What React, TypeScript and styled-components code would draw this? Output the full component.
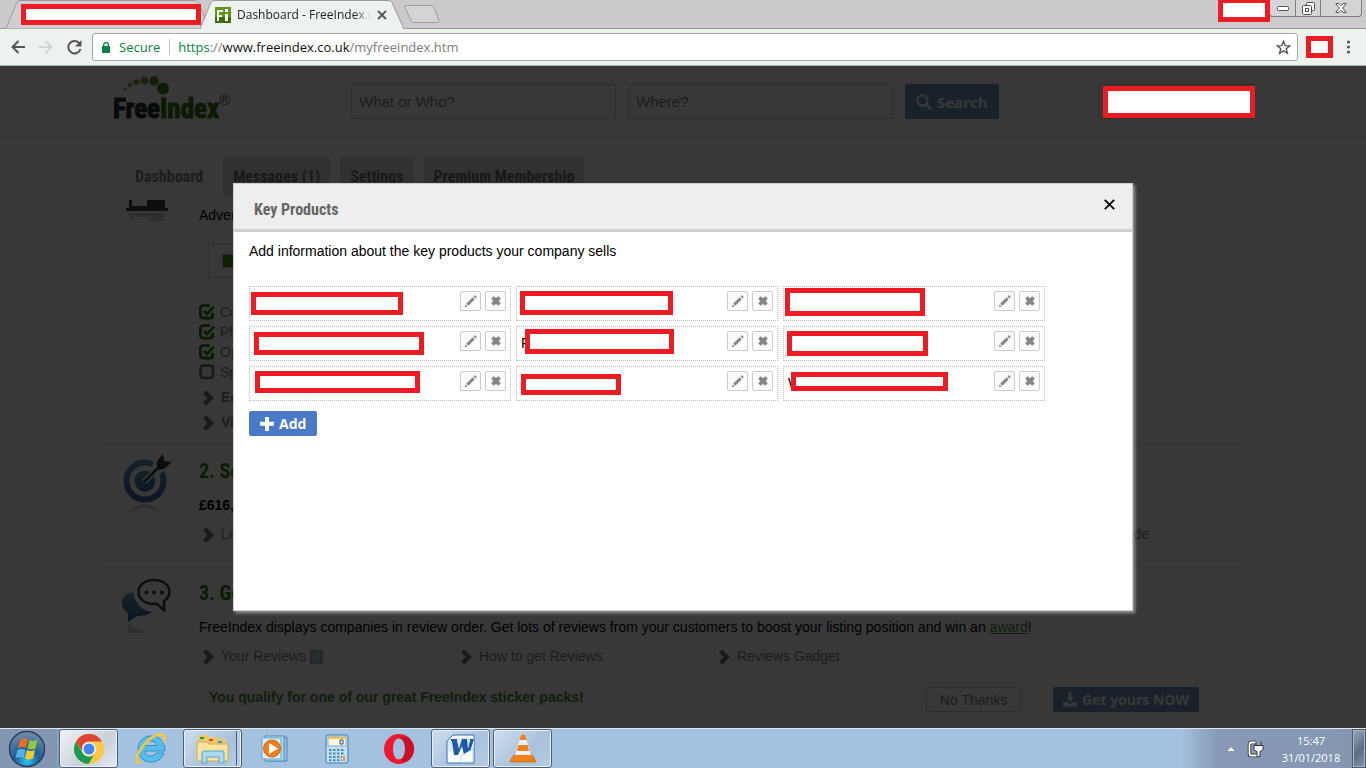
import React from "react";
import styled, { createGlobalStyle } from "styled-components";

const ARIAL = `"Liberation Sans", Arial, sans-serif`;
const UI = `"Open Sans", "Noto Sans", sans-serif`;
const NARROW = `"Liberation Sans Narrow", "Roboto Condensed", "DejaVu Sans Condensed", sans-serif`;

const GlobalStyle = createGlobalStyle`
  *, *::before, *::after { box-sizing: border-box; }
  body { margin: 0; background: #383838; font-family: ${ARIAL}; font-size: 14px; color: #000; }
  button, input { font: inherit; margin: 0; }
  h1, h2, p, ul { margin: 0; padding: 0; }
  ul { list-style: none; }
  svg { display: block; flex: none; }
`;

const Screen = styled.div`
  display: flex;
  flex-direction: column;
  min-height: 100vh;
`;

/* Red frame that hides private details. */
const Mask = styled.span<{ $x: number; $y: number; $w: number; $h: number }>`
  position: absolute;
  left: ${(p) => p.$x}px;
  top: ${(p) => p.$y}px;
  width: ${(p) => p.$w}px;
  height: ${(p) => p.$h}px;
  border: 5px solid #ed1c24;
  background: #fff;
  z-index: 2;
`;

/* ---------- browser chrome ---------- */

const TitleBar = styled.div`
  position: relative;
  display: flex;
  height: 29px;
  padding-left: 6px;
  background: #cdcacd;
  border-bottom: 1px solid #9c999c;
  font-family: ${UI};
  font-size: 12px;
`;

const Tab = styled.div<{ $active?: boolean }>`
  position: relative;
  display: flex;
  align-items: center;
  gap: 6px;
  width: 204px;
  height: 29px;
  padding: 0 17px 0 15px;
  margin-left: ${(p) => (p.$active ? "-10px" : "0")};
  z-index: ${(p) => (p.$active ? 1 : 0)};
`;

const TabShape = styled.svg`
  position: absolute;
  inset: 0;
  width: 100%;
  height: 100%;
`;

const TabTitle = styled.span`
  position: relative;
  flex: 1;
  min-width: 0;
  white-space: nowrap;
  line-height: 18px;
  color: #222;
  mask-image: linear-gradient(to right, #000 118px, transparent 134px);
`;

const PlainButton = styled.button`
  position: relative;
  display: flex;
  align-items: center;
  justify-content: center;
  padding: 0;
  border: 0;
  background: none;
  color: #555;
`;

const WindowButtons = styled.div`
  position: relative;
  display: flex;
  height: 17px;
  margin: 0 4px 0 auto;
  border: 1px solid #7d7b7d;
  border-top: 0;
  border-radius: 0 0 4px 4px;
  background: #d6d3d6;
`;

const WindowButton = styled(PlainButton)<{ $wide?: boolean }>`
  width: ${(p) => (p.$wide ? 41 : 25)}px;
  & + & { border-left: 1px solid #7d7b7d; }
`;

const Toolbar = styled.div`
  display: flex;
  align-items: center;
  height: 37px;
  padding: 0 8px 0 6px;
  background: #eef2ef;
  border-bottom: 1px solid #b0b4b1;
`;

const NavButton = styled(PlainButton)`
  width: 24px;
  height: 28px;
  margin-right: 4px;
`;

const AddressBar = styled.label`
  display: flex;
  flex: 1;
  align-items: center;
  height: 28px;
  margin-left: 2px;
  padding: 0 6px 0 9px;
  border: 1px solid #a6a9a7;
  border-radius: 3px;
  background: #fff;
  font-family: ${UI};
  font-size: 13px;
  line-height: 18px;
`;

const Secure = styled.span`
  margin-left: 9px;
  padding-right: 9px;
  border-right: 1px solid #c4c4c4;
  line-height: 16px;
  color: #0b8043;
`;

const Url = styled.span`
  flex: 1;
  margin-left: 8px;
  color: #7d7d7d;
  b { font-weight: 400; color: #111; }
  i { font-style: normal; color: #0b8043; }
`;

const ExtensionSlot = styled.div`
  position: relative;
  width: 44px;
  height: 22px;
`;

/* ---------- page behind the dialog ---------- */

const Page = styled.div`
  position: relative;
  flex: 1;
  overflow: hidden;
  background: #fff;
`;

const SiteHeader = styled.header`
  border-bottom: 1px solid #d0d0d0;
  padding-right: 16px;
`;

const HeaderInner = styled.div`
  display: flex;
  align-items: flex-start;
  max-width: 1160px;
  height: 71px;
  margin: 0 auto;
  padding: 18px 0 0 18px;
`;

const Logo = styled.a`
  position: relative;
  width: 238px;
  height: 46px;
  margin-top: -8px;
  color: #2b3330;
  text-decoration: none;
`;

const LogoDots = styled.svg`
  position: absolute;
  left: 10px;
  top: 0;
`;

const LogoText = styled.span`
  display: flex;
  padding-top: 17px;
  font: 700 27px/32px ${NARROW};
  -webkit-text-stroke: 1px currentColor;
  span { color: #357812; }
  small { font: 400 15px/14px ${ARIAL}; color: #555; -webkit-text-stroke: 0; }
`;

const SearchInput = styled.input`
  width: 265px;
  height: 35px;
  margin-right: 12px;
  padding: 0 7px;
  border: 1px solid #c8c8c8;
  border-radius: 2px;
  background: #fff;
  font-size: 15px;
  &::placeholder { color: #858585; opacity: 1; }
`;

const BlueButton = styled.button<{ $dim?: boolean; $tall?: boolean }>`
  display: flex;
  align-items: center;
  justify-content: center;
  gap: 5px;
  height: ${(p) => (p.$tall ? 35 : 25)}px;
  padding: 0 ${(p) => (p.$dim && !p.$tall ? 10 : 11)}px;
  border: 0;
  border-radius: 2px;
  background: ${(p) => (p.$dim ? "#7397c5" : "#4a7ac7")};
  color: #fff;
  font: 700 ${(p) => (p.$tall ? 15 : 14)}px/20px ${UI};
  white-space: nowrap;
`;

const Account = styled.div`
  position: relative;
  width: 157px;
  height: 35px;
  margin-left: auto;
  border: 1px solid #d0d0d0;
  border-radius: 2px;
`;

const Content = styled.main`
  padding: 19px 16px 0 0;
`;

const Container = styled.div`
  max-width: 1140px;
  margin: 0 auto;
`;

const Tabs = styled.nav`
  display: flex;
  gap: 10px;
  padding-left: 20px;
`;

const PageTab = styled.a<{ $current?: boolean }>`
  height: 40px;
  padding: 0 10px;
  background: ${(p) => (p.$current ? "transparent" : "#d9e4d8")};
  color: ${(p) => (p.$current ? "#858585" : "#707070")};
  font: 700 16px/40px ${NARROW};
  text-decoration: none;
`;

const Section = styled.section<{ $top: number }>`
  display: grid;
  grid-template-columns: 94px 1fr;
  padding-top: ${(p) => p.$top}px;
  & + & { border-top: 1px dotted #ccc; }
`;

const Figure = styled.div`
  padding-left: 16px;
  margin-top: -5px;
`;

const Copy = styled.p<{ $bold?: boolean }>`
  line-height: 20px;
  font-weight: ${(p) => (p.$bold ? 700 : 400)};
  a { color: #4d7d3c; }
`;

const Title = styled.h2`
  margin-bottom: 12px;
  color: #2d7a12;
  font: 700 20px/24px ${NARROW};
`;

const ProgressBox = styled.div`
  width: 400px;
  height: 35px;
  margin: 18px 0 24px 9px;
  padding: 10px 13px;
  border: 1px solid #cfcfcf;
`;

const ProgressBar = styled.div`
  height: 14px;
  border: 1px solid #ccc;
  background: #3f8f12;
`;

const CheckRow = styled.li`
  display: flex;
  align-items: center;
  gap: 5px;
  height: 20px;
  color: #858585;
`;

const Links = styled.ul<{ $stack?: boolean }>`
  display: flex;
  flex-direction: ${(p) => (p.$stack ? "column" : "row")};
  padding: ${(p) => (p.$stack ? "3px 0 8px 3px" : "7px 0 13px 3px")};
  font-weight: ${(p) => (p.$stack ? 700 : 400)};
`;

const LinkItem = styled.li<{ $end?: boolean }>`
  width: 258px;
  height: 25px;
  margin-left: ${(p) => (p.$end ? "auto" : "0")};
  padding-right: ${(p) => (p.$end ? "96px" : "0")};
  text-align: ${(p) => (p.$end ? "right" : "left")};
  line-height: 25px;
  a {
    display: ${(p) => (p.$end ? "inline" : "flex")};
    align-items: center;
    gap: 6px;
    color: #858585;
    text-decoration: none;
  }
`;

const Count = styled.span`
  width: 13px;
  height: 14px;
  margin-left: -2px;
  background: #9cbcc1;
  color: #e4eef0;
  font-size: 12px;
  line-height: 14px;
  text-align: center;
`;

const Offer = styled.div`
  display: flex;
  align-items: center;
  margin: 5px 46px 0 10px;
  p { flex: 1; padding-bottom: 5px; color: #4c8a30; font-weight: 700; line-height: 20px; }
`;

const GhostButton = styled.button`
  width: 95px;
  height: 25px;
  margin-right: 32px;
  padding: 0;
  border: 1px solid #c8c8c8;
  border-radius: 2px;
  background: none;
  color: #858585;
`;

/* ---------- dialog ---------- */

const Backdrop = styled.div`
  position: absolute;
  inset: 0;
  display: flex;
  align-items: center;
  justify-content: center;
  background: rgba(0, 0, 0, 0.78);
`;

const Dialog = styled.div`
  display: flex;
  flex-direction: column;
  width: 900px;
  max-width: 100%;
  min-height: 428px;
  border: 1px solid #ccc;
  background: #fff;
  box-shadow: 2px 2px 3px #999;
`;

const DialogHead = styled.div`
  display: flex;
  align-items: center;
  justify-content: space-between;
  height: 48px;
  padding: 0 15px 0 20px;
  border-bottom: 3px solid #d0d0d0;
  background: #eee;
  h1 { padding-top: 6px; color: #666; font: 700 16px/24px ${NARROW}; }
`;

const CloseButton = styled(PlainButton)`
  width: 16px;
  height: 16px;
  margin-bottom: 4px;
  color: #000;
`;

const DialogBody = styled.div`
  padding: 9px 15px;
  line-height: 20px;
`;

const ProductGrid = styled.ul`
  display: grid;
  grid-template-columns: repeat(3, 262px);
  gap: 5px;
  margin: 25px 0 10px;
`;

const Product = styled.li`
  position: relative;
  display: flex;
  align-items: flex-start;
  gap: 4px;
  height: 35px;
  padding: 4px;
  border: 1px dotted #c0c0c0;
`;

const ProductName = styled.span`
  flex: 1;
  line-height: 24px;
`;

const IconButton = styled(PlainButton)`
  width: 21px;
  height: 20px;
  border: 1px solid #ccc;
  border-radius: 2px;
  background: #fdfafd;
  color: #858585;
`;

/* ---------- taskbar ---------- */

const Taskbar = styled.footer`
  display: flex;
  height: 40px;
  border-top: 1px solid #dbe7f5;
  background: linear-gradient(to right, #8397b2 0, #8397b2 56px, #a4c1df 66px, #a4c1df calc(100% - 185px), #8799b4 calc(100% - 148px), #8496b0 100%);
  box-shadow: 0 -1px #30343b;
`;

const Task = styled.button<{ $kind?: "open" | "active" | "stack" }>`
  display: flex;
  align-items: center;
  justify-content: center;
  width: 59px;
  height: 39px;
  margin-right: 3px;
  padding: 0;
  border: 1px solid ${(p) => (p.$kind ? "#4f6076" : "transparent")};
  border-radius: 3px;
  background: ${(p) =>
    p.$kind === "active"
      ? "linear-gradient(135deg, #f1f2f5, #c9d0dc 60%, #e8ebf1)"
      : p.$kind
        ? "linear-gradient(135deg, #cfdeee, #a9c1dd 60%, #b6cde6)"
        : "none"};
  box-shadow: ${(p) =>
    p.$kind === "stack"
      ? "inset 0 0 0 1px #e6eff8, inset -4px 0 #b8cde4, inset -5px 0 #4f6076"
      : p.$kind
        ? "inset 0 0 0 1px #e6eff8"
        : "none"};
`;

const StartButton = styled(PlainButton)`
  width: 54px;
  margin-right: 5px;
`;

const Tray = styled.div`
  display: flex;
  align-items: center;
  margin-left: auto;
  color: #fff;
  font: 11px/17px ${UI};
  text-align: center;
`;

const Clock = styled.time`
  width: 82px;
  margin-left: 4px;
`;

const ShowDesktop = styled.button`
  width: 14px;
  height: 39px;
  padding: 0;
  border: 1px solid #4b5a6c;
  background: linear-gradient(135deg, #9aabc0, #5b6c80 55%, #8495ab);
  box-shadow: inset 0 0 0 1px #a6b5c9;
`;

/* ---------- icons ---------- */

const Chevron = () => (
  <svg width="13" height="16" viewBox="0 0 13 16" fill="#757575">
    <path d="M1 3.4 4.2.4 12 8 4.2 15.6 1 12.6 5.6 8z" />
  </svg>
);

const Check = ({ on }: { on: boolean }) => (
  <svg width="16" height="16" viewBox="0 0 16 16" fill="none" strokeWidth="2.8" stroke={on ? "#2d7a12" : "#777"}>
    <path d={on ? "M13.6 9v2.6a2.5 2.5 0 0 1-2.5 2.5H3.9a2.5 2.5 0 0 1-2.5-2.5V4.2a2.5 2.5 0 0 1 2.5-2.5h7" : "M4 1.6h7.5A2.4 2.4 0 0 1 13.9 4v7.5a2.4 2.4 0 0 1-2.4 2.4H4a2.4 2.4 0 0 1-2.4-2.4V4A2.4 2.4 0 0 1 4 1.6z"} />
    {on && <path d="m5 7 3 3 7-7.4" />}
  </svg>
);

const Pencil = () => (
  <svg width="13" height="13" viewBox="0 0 13 13" fill="currentColor">
    <path d="M.8 12.2 1.5 9.4 3.6 11.5zM2.2 8.700 8.6 2.300 10.7 4.400 4.300 10.8zM9.500 1.400l.8-.8q.5-.5 1 0l1.100 1.100q.5.5 0 1l-.8.8z" />
  </svg>
);

const Cross = () => (
  <svg width="10" height="10" viewBox="0 0 10 10" fill="currentColor">
    <path d="M.4 2.4 2.4.4h.7L5 2.3 6.9.4h.7l2 2v.7L7.7 5l1.9 1.9v.7l-2 2h-.7L5 7.7 3.1 9.6h-.7l-2-2v-.7L2.3 5 .4 3.1z" />
  </svg>
);

const Plus = () => (
  <svg width="14" height="14" viewBox="0 0 14 14" fill="#fff">
    <path d="M5 0h4v4.800h5v4H9V14H5V8.800H0v-4h5z" />
  </svg>
);

const Magnifier = () => (
  <svg width="16" height="16" viewBox="0 0 16 16" fill="none" stroke="#fff">
    <circle cx="6.500" cy="6.500" r="5.200" strokeWidth="2.200" />
    <path d="m10.500 10.500 4 4" strokeWidth="3" strokeLinecap="round" />
  </svg>
);

const Download = () => (
  <svg width="14" height="15" viewBox="0 0 14 15" fill="#fff">
    <path d="M5.500 0h3v5.500H11L7 9.800 3 5.500h2.500zM0 10h4l3 2.500L10 10h4v4.500H0z" />
  </svg>
);

const LogoArc = () => (
  <LogoDots width="48" height="22" viewBox="0 0 48 22">
    <circle cx="2" cy="13" r="1.700" fill="#a9ab8a" />
    <circle cx="7" cy="9" r="2.300" fill="#94a065" />
    <circle cx="13.500" cy="6" r="3" fill="#8c9c4e" />
    <circle cx="21.500" cy="4.500" r="3.800" fill="#849a32" />
    <circle cx="31" cy="5" r="4.700" fill="#558a1c" />
    <circle cx="40" cy="12.500" r="6" fill="#36800f" />
  </LogoDots>
);

const Laptop = () => (
  <svg width="52" height="24" viewBox="0 0 52 24">
    <path d="M8 0h3v6h15V0h18v8h3v3H5V8h3z" fill="#3c4440" />
    <path d="M8 13h37l-2 8H28v-4H12v4H8z" fill="#d5d5d5" />
  </svg>
);

const Target = () => (
  <svg width="54" height="62" viewBox="0 0 54 62" fill="none">
    <defs>
      <linearGradient id="targetBlue" x1="0" y1="0" x2="0" y2="1">
        <stop offset="0" stopColor="#5d93b5" />
        <stop offset="1" stopColor="#3a64a8" />
      </linearGradient>
    </defs>
    <circle cx="24" cy="27" r="18.500" stroke="url(#targetBlue)" strokeWidth="6" />
    <circle cx="24" cy="27" r="10.500" fill="url(#targetBlue)" />
    <path d="M33 5 30 18l7 4 10-9z" fill="#fff" />
    <path d="m23 28 16-16" stroke="#fff" strokeWidth="6" />
    <path d="m23 28 16-16" stroke="#333b3a" strokeWidth="2.500" />
    <path d="m36 7 6-7 1 7 8 1-8 7-7 1z" fill="#333b3a" />
    <path d="M7 59q17-18 34 0-5-3-9-3-8-5-16 0-4 0-9 3z" fill="#c9cfca" />
  </svg>
);

const Bubbles = () => (
  <svg width="54" height="60" viewBox="0 0 54 60" fill="none">
    <defs>
      <linearGradient id="bubbleBlue" x1="0" y1="0" x2="0" y2="1">
        <stop offset="0" stopColor="#6a9cb9" />
        <stop offset="1" stopColor="#335f9f" />
      </linearGradient>
    </defs>
    <path d="M12 16C3 18 0 23 1 29c1 4 3 6 6 8v9l9-6c6 0 11-1 15-4-9-1-16-6-19-20z" fill="url(#bubbleBlue)" />
    <path d="M33 4c9 0 15.500 5 15.500 12 0 4-2 7-5.500 9v9l-7-6h-3c-9 0-15.500-5-15.500-12S24 4 33 4z" stroke="#3a3f3e" strokeWidth="2.500" />
    <g fill="#3a3f3e"><circle cx="25.500" cy="16.500" r="2" /><circle cx="33" cy="16.500" r="2" /><circle cx="41" cy="16.500" r="2" /></g>
    <path d="M7 48l6 4q7 2 14 5H7z" fill="#ccd2cd" />
  </svg>
);

const Favicon = () => (
  <svg width="16" height="16" viewBox="0 0 16 16" style={{ position: "relative" }}>
    <path d="M0 0h16v16H0z" fill="#62951f" />
    <path d="M0 10h16v6H0z" fill="#3c6b10" />
    <path d="M2 3h6v2H4v3h3v2H4v4H2zM10 7h3v7h-3zM10 2h3v3h-3z" fill="#fff" />
  </svg>
);

const Windows = () => (
  <svg width="38" height="38" viewBox="0 0 38 38">
    <defs>
      <radialGradient id="orb" cx=".5" cy=".85" r=".8">
        <stop offset="0" stopColor="#2bc4f4" />
        <stop offset=".45" stopColor="#1f5f98" />
        <stop offset="1" stopColor="#6f8ca8" />
      </radialGradient>
    </defs>
    <circle cx="19" cy="19" r="17.500" fill="url(#orb)" stroke="#29405c" strokeWidth="1.500" />
    <path d="M12 10q4-3 8-1l-2 9q-4-2-8 0z" fill="#ee6a28" />
    <path d="M21.500 10q4 2 8-.500l-2 9q-4 2-8 0z" fill="#93c83e" />
    <path d="M9.500 20q4-2 8 0l-2 8q-4-2-8 0z" fill="#55b0ec" />
    <path d="M19 20q4 2 8 0l-2 8.500q-4 2-8 0z" fill="#fbc928" />
  </svg>
);

const Chrome = () => (
  <svg width="30" height="30" viewBox="0 0 30 30">
    <circle cx="15" cy="15" r="15" fill="#fbc941" />
    <path d="M2 7.500A15 15 0 0 1 28 7.500H15A7.500 7.500 0 0 0 8.500 11.300L8 17z" fill="#db4437" />
    <path d="M2 7.500A15 15 0 0 0 14.500 30l6.500-11A7 7 0 0 1 8.500 18.800z" fill="#1a9a58" />
    <circle cx="15" cy="15" r="7" fill="#f4f4f4" />
    <circle cx="15" cy="15" r="5.500" fill="#4285f4" />
  </svg>
);

const Explorer = () => (
  <svg width="34" height="32" viewBox="0 0 34 32" fill="none">
    <path d="M17 3C9 3 4 9 4 16c0 8 6 13 13 13 6 0 11-3 13-9h-8c-1 2-3 3-5 3-4 0-6-2-6-5h20C31 9 26 3 17 3zm-6 9.500c.500-3 3-4.500 6-4.500s5.500 1.500 6 4.500z" fill="#56bdee" stroke="#2684c4" strokeWidth=".8" fillRule="evenodd" />
    <path d="M7 29C0 32 2 22 9 13S26-1 30 3c2 2 1 4-1 6" stroke="#f5c93a" strokeWidth="2.600" />
  </svg>
);

const Folder = () => (
  <svg width="34" height="32" viewBox="0 0 34 32">
    <path d="M2 6V3q0-1 1-1h8l2 2h9v2h8v22H2z" fill="#ecc869" />
    <path d="M4 4h4v2H4z" fill="#2a9a3a" /><path d="M13 6h4v2h-4z" fill="#d8443a" /><path d="M22 8h4v2h-4z" fill="#3a8fd8" />
    <path d="M1 9h10l2 2h19v17H1z" fill="#f8e3a0" stroke="#d6ad50" />
    <path d="M6 30V20q0-2 2-2h18q2 0 2 2v10h-5v-6H11v6z" fill="#a9daf3" stroke="#5ba3cf" />
  </svg>
);

const Media = () => (
  <svg width="28" height="28" viewBox="0 0 28 28">
    <path d="M7 2h19v24H7z" fill="#8fc1e3" stroke="#4c8ab8" />
    <path d="M4 1h19v25H4z" fill="#b6d8ef" stroke="#4c8ab8" />
    <path d="M1 3h19v21H1z" fill="#dbecf7" stroke="#6aa3cc" />
    <circle cx="11" cy="13.500" r="8.500" fill="#f08019" stroke="#d1650f" />
    <path d="m8 8 9 5.500L8 19z" fill="#fff" />
  </svg>
);

const Calculator = () => (
  <svg width="24" height="30" viewBox="0 0 24 30">
    <rect x="1" y="1" width="22" height="28" rx="2" fill="#c4e0f3" stroke="#3d7fb1" />
    <path d="M3 3h18v9H3z" fill="#f6f7f0" stroke="#8aa9bb" /><path d="M3 3h18v2H3z" fill="#f1c04c" />
    <path d="M15 6h3v4h-3z" fill="none" stroke="#345" />
    <path d="M4 16h16M4 19.500h16M4 23h13M4 26.300h13" stroke="#4d8ab8" strokeWidth="2" strokeDasharray="2.500 1.500" />
    <path d="M18 22h2v5h-2z" fill="#f1962c" />
  </svg>
);

const Opera = () => (
  <svg width="30" height="30" viewBox="0 0 30 30">
    <path fillRule="evenodd" d="M15 0a15 15 0 1 0 0 30 15 15 0 0 0 0-30zm0 4.500c4 0 6 5 6 10.500s-2 10.500-6 10.500S9 20.500 9 15 11 4.500 15 4.500z" fill="#ee1830" />
    <path d="M15 25.500c4 0 6-5 6-10.500S19 4.500 15 4.500C17 3 20 2 24 3a15 15 0 0 1 0 24c-4 1-7 0-9-1.500z" fill="#c81026" />
  </svg>
);

const Word = () => (
  <svg width="30" height="30" viewBox="0 0 30 30">
    <path d="M7 1h21v28H1V7z" fill="#f5f9fd" stroke="#3b6fae" />
    <path d="M2 6q12-4 26-2v9L2 18z" fill="#dbe9f6" />
    <path d="M5 5h6v2l2 8 3-10h5l1 10 2-8V5h4l-5 16h-5l-2-9-4 9H8L6 7H5z" fill="#1d58a6" />
    <path d="m15 22 12-7v13H15z" fill="#fff" stroke="#c5d5e5" />
  </svg>
);

const Cone = () => (
  <svg width="28" height="29" viewBox="0 0 28 29">
    <path d="M5 21h18l4 6q0 1-1 1H2q-1 0-1-1z" fill="#f08019" stroke="#c9610a" strokeWidth=".7" />
    <path d="M12 1q2-1 4 0l6 21q-8 4-16 0z" fill="#f4f1ee" />
    <path d="M12 1q2-1 4 0l1.500 5h-7zM9.400 11h9.200l1.400 6H8zM6.500 21h15l.500 2q-8 4-16 0z" fill="#f0801c" />
  </svg>
);

const PRODUCTS = [
  { name: "", x: 1, y: 5, w: 152, h: 23 },
  { name: "", x: 3, y: 4, w: 153, h: 24 },
  { name: "", x: 1, y: 1, w: 140, h: 28 },
  { name: "", x: 4, y: 5, w: 170, h: 23 },
  { name: "F", x: 8, y: 2, w: 149, h: 25 },
  { name: "", x: 3, y: 4, w: 141, h: 25 },
  { name: "", x: 5, y: 4, w: 165, h: 22 },
  { name: "", x: 4, y: 7, w: 100, h: 21 },
  { name: "W", x: 7, y: 5, w: 157, h: 19 },
];

const NavLink = ({ children, end }: { children: React.ReactNode; end?: boolean }) => (
  <LinkItem $end={end}>
    <a href="#">{!end && <Chevron />}{children}</a>
  </LinkItem>
);

export default function App() {
  return (
    <Screen>
      <GlobalStyle />
      <TitleBar>
        <Tab>
          <TabShape viewBox="0 0 204 29" preserveAspectRatio="none">
            <path d="M0 28.500 11 2Q12 .5 14 .5H188q3 0 4 2l12 26" fill="#d1ced1" stroke="#9c999c" />
          </TabShape>
          <Mask aria-hidden="true" $x={15} $y={4} $w={180} $h={21} />
        </Tab>
        <Tab $active>
          <TabShape viewBox="0 0 204 29" preserveAspectRatio="none">
            <path d="M0 29 11 2Q12 .5 14 .5H188q3 0 4 2l12 26.500" fill="#eef2ef" stroke="#9c999c" />
          </TabShape>
          <Favicon />
          <TabTitle>Dashboard - FreeIndex.co</TabTitle>
          <PlainButton aria-label="Close tab">
            <svg width="10" height="10" viewBox="0 0 10 10" stroke="#555" strokeWidth="1.800"><path d="m1 1 8 8M9 1 1 9" /></svg>
          </PlainButton>
        </Tab>
        <PlainButton aria-label="New tab">
          <svg width="36" height="18" viewBox="0 0 36 18" fill="#d6d3d6" stroke="#a09da0"><path d="M2 .5h25q2 0 3 2l5 13q0 2-2 2H10q-2 0-3-2L1 2.500Q0 .5 2 .5z" /></svg>
        </PlainButton>
        <WindowButtons>
          <Mask aria-hidden="true" $x={-52} $y={-2} $w={52} $h={24} />
          <WindowButton aria-label="Minimise">
            <svg width="12" height="5" viewBox="0 0 12 5"><rect x=".5" y=".5" width="11" height="4" rx="1" fill="#fff" stroke="#555" /></svg>
          </WindowButton>
          <WindowButton aria-label="Restore">
            <svg width="13" height="13" viewBox="0 0 13 13" fill="#fff" stroke="#555"><rect x="4.500" y=".5" width="8" height="8" rx="1" /><rect x=".5" y="3.500" width="9" height="9" rx="1" /><rect x="3.500" y="6.500" width="3" height="3" /></svg>
          </WindowButton>
          <WindowButton $wide aria-label="Close window">
            <svg width="12" height="10" viewBox="0 0 12 10" fill="#fff" stroke="#555"><path d="M.8.5h3L6 2.800 8.200.5h3L7.800 5l3.400 4.500h-3L6 7.200 3.800 9.500h-3L4.200 5z" /></svg>
          </WindowButton>
        </WindowButtons>
      </TitleBar>

      <Toolbar>
        <NavButton aria-label="Back">
          <svg width="14" height="14" viewBox="0 0 14 14" fill="none" stroke="#555" strokeWidth="2"><path d="M14 7H1.500M7.500 1l-6 6 6 6" /></svg>
        </NavButton>
        <NavButton aria-label="Forward">
          <svg width="14" height="14" viewBox="0 0 14 14" fill="none" stroke="#d0d3d1" strokeWidth="2"><path d="M0 7h12.500M6.500 1l6 6-6 6" /></svg>
        </NavButton>
        <NavButton aria-label="Reload">
          <svg width="15" height="15" viewBox="0 0 15 15" fill="none" stroke="#555" strokeWidth="2"><path d="M12.500 3.500a6.200 6.200 0 1 0 1 5.500" /><path d="M14.500 0v6.500H8z" fill="#555" stroke="none" /></svg>
        </NavButton>
        <AddressBar>
          <svg width="8" height="11" viewBox="0 0 8 11"><path d="M0 4h8v7H0z" fill="#0b8043" /><path d="M1.700 4.500V3a2.300 2.300 0 0 1 4.600 0v1.500" fill="none" stroke="#0b8043" strokeWidth="1.300" /></svg>
          <Secure>Secure</Secure>
          <Url><i>https</i>://<b>www.freeindex.co.uk</b>/myfreeindex.htm</Url>
          <svg width="15" height="15" viewBox="0 0 15 15" fill="none" stroke="#555" strokeWidth="1.400"><path d="m7.500 1.300 1.700 4.300 4.600.3-3.600 2.900 1.200 4.500-3.900-2.500-3.900 2.500 1.200-4.500L1.200 5.900l4.600-.3z" /></svg>
        </AddressBar>
        <ExtensionSlot><Mask aria-hidden="true" $x={8} $y={0} $w={27} $h={22} /></ExtensionSlot>
        <PlainButton aria-label="Browser menu">
          <svg width="16" height="14" viewBox="0 0 16 14" fill="#555"><circle cx="6.500" cy="2" r="1.600" /><circle cx="6.500" cy="7" r="1.600" /><circle cx="6.500" cy="12" r="1.600" /></svg>
        </PlainButton>
      </Toolbar>

      <Page>
        <SiteHeader>
          <HeaderInner>
            <Logo href="#" aria-label="FreeIndex">
              <LogoArc />
              <LogoText>Free<span>Index</span><small>®</small></LogoText>
            </Logo>
            <SearchInput aria-label="What or who" placeholder="What or Who?" />
            <SearchInput aria-label="Where" placeholder="Where?" />
            <BlueButton $dim $tall><Magnifier />Search</BlueButton>
            <Account><Mask aria-hidden="true" $x={4} $y={1} $w={152} $h={32} /></Account>
          </HeaderInner>
        </SiteHeader>
        <Content>
          <Container>
            <Tabs>
              <PageTab href="#" $current>Dashboard</PageTab>
              <PageTab href="#">Messages (1)</PageTab>
              <PageTab href="#">Settings</PageTab>
              <PageTab href="#">Premium Membership</PageTab>
            </Tabs>
            <Section $top={8}>
              <Figure><Laptop /></Figure>
              <div>
                <Copy>Advertise</Copy>
                <ProgressBox><ProgressBar /></ProgressBox>
                <ul>
                  <CheckRow><Check on />Company</CheckRow>
                  <CheckRow><Check on />Photos</CheckRow>
                  <CheckRow><Check on />Opening</CheckRow>
                  <CheckRow><Check on={false} />Special</CheckRow>
                </ul>
                <Links $stack>
                  <NavLink>Edit</NavLink>
                  <NavLink>View</NavLink>
                </Links>
              </div>
            </Section>
            <Section $top={15}>
              <Figure><Target /></Figure>
              <div>
                <Title>2. Sell</Title>
                <Copy $bold>£616,</Copy>
                <Links>
                  <NavLink>Leads</NavLink>
                  <NavLink end>Guide</NavLink>
                </Links>
              </div>
            </Section>
            <Section $top={20}>
              <Figure><Bubbles /></Figure>
              <div>
                <Title>3. Get</Title>
                <Copy>
                  FreeIndex displays companies in review order. Get lots of reviews from your customers to boost your listing position and win an <a href="#">award</a>!
                </Copy>
                <Links>
                  <NavLink>Your Reviews <Count>4</Count></NavLink>
                  <NavLink>How to get Reviews</NavLink>
                  <NavLink>Reviews Gadget</NavLink>
                </Links>
                <Offer>
                  <p>You qualify for one of our great FreeIndex sticker packs!</p>
                  <GhostButton>No Thanks</GhostButton>
                  <BlueButton $dim><Download />Get yours NOW</BlueButton>
                </Offer>
              </div>
            </Section>
          </Container>
        </Content>

        <Backdrop>
          <Dialog role="dialog" aria-labelledby="dialog-title">
            <DialogHead>
              <h1 id="dialog-title">Key Products</h1>
              <CloseButton aria-label="Close">
                <svg width="11" height="11" viewBox="0 0 11 11" stroke="currentColor" strokeWidth="1.800"><path d="m.8.8 9.400 9.400M10.200.8.8 10.200" /></svg>
              </CloseButton>
            </DialogHead>
            <DialogBody>
              <p>Add information about the key products your company sells</p>
              <ProductGrid>
                {PRODUCTS.map((m, i) => (
                  <Product key={i}>
                    <ProductName>{m.name}</ProductName>
                    <Mask aria-hidden="true" $x={m.x} $y={m.y} $w={m.w} $h={m.h} />
                    <IconButton aria-label="Edit product"><Pencil /></IconButton>
                    <IconButton aria-label="Remove product"><Cross /></IconButton>
                  </Product>
                ))}
              </ProductGrid>
              <BlueButton><Plus />Add</BlueButton>
            </DialogBody>
          </Dialog>
        </Backdrop>
      </Page>

      <Taskbar>
        <StartButton aria-label="Start"><Windows /></StartButton>
        <Task $kind="active" aria-label="Chrome"><Chrome /></Task>
        <Task aria-label="Internet Explorer"><Explorer /></Task>
        <Task $kind="stack" aria-label="File Explorer"><Folder /></Task>
        <Task aria-label="Media Player"><Media /></Task>
        <Task aria-label="Calculator"><Calculator /></Task>
        <Task aria-label="Opera"><Opera /></Task>
        <Task $kind="open" aria-label="Word"><Word /></Task>
        <Task $kind="open" aria-label="VLC"><Cone /></Task>
        <Tray>
          <PlainButton aria-label="Show hidden icons">
            <svg width="10" height="6" viewBox="0 0 10 6"><path d="m5 .5 4.500 5h-9z" fill="#fff" stroke="#66788f" strokeWidth=".6" /></svg>
          </PlainButton>
          <svg width="30" height="18" viewBox="0 0 30 18">
            <path d="M20 2.500h-5q-1.500 0-1.500 1.500v10q0 1.500 1.500 1.500h7" fill="none" stroke="#333" strokeWidth="3.500" />
            <path d="M20 2.500h-5q-1.500 0-1.500 1.500v10q0 1.500 1.500 1.500h7" fill="none" stroke="#fff" strokeWidth="1.800" />
            <path d="M18 5.500h9V9q0 2-3 2.500v5h-3v-5q-3-.5-3-2.500zM20 5.500v-4M25 5.500v-4" fill="#fff" stroke="#333" />
          </svg>
          <Clock>15:47<br />31/01/2018</Clock>
          <ShowDesktop aria-label="Show desktop" />
        </Tray>
      </Taskbar>
    </Screen>
  );
}
